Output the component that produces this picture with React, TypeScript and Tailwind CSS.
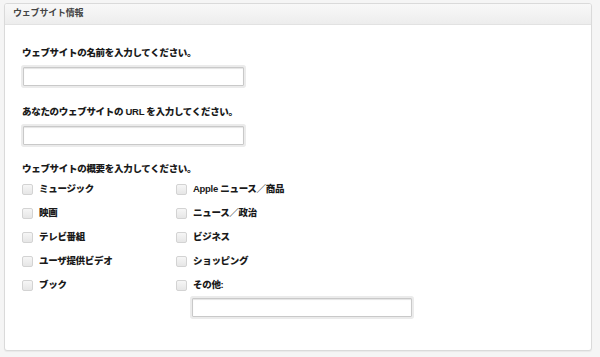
const left = ["ミュージック", "映画", "テレビ番組", "ユーザ提供ビデオ", "ブック"];
const right = ["Apple ニュース／商品", "ニュース／政治", "ビジネス", "ショッピング", "その他:"];

function Check({ label }: { label: string }) {
  return (
    <label className="flex h-[24px] items-center gap-[6px]">
      <span className="h-[11px] w-[11px] shrink-0 rounded-[2px] border border-[#d3d3d3] bg-gradient-to-b from-[#f6f6f6] to-[#e6e6e6]" />
      <span className="text-[9.5px] font-extrabold leading-none tracking-[-0.3px] text-[#1a1a1a]">{label}</span>
    </label>
  );
}

function Field({ className = "" }: { className?: string }) {
  return (
    <input
      type="text"
      className={`h-[19px] rounded-[1px] border border-[#c9c9c9] bg-white shadow-[0_0_0_2px_#ebebeb,inset_0_1px_1px_#e4e4e4] outline-none ${className}`}
    />
  );
}

export default function App() {
  return (
    <div
      className="h-[357px] w-[600px] bg-[#f5f5f5] pl-[4px] pt-[3px]"
      style={{ fontFamily: '"Liberation Sans", "Noto Sans CJK JP", sans-serif' }}
    >
      <div className="h-[348px] w-[588px] overflow-hidden rounded-[3px] border border-[#dadada] bg-white shadow-[0_1px_1px_rgba(0,0,0,0.05)]">
        {/* Header */}
        <div className="flex h-[21px] items-center border-b border-[#e2e2e2] bg-gradient-to-b from-[#f8f8f8] to-[#ededed] pl-[8px]">
          <span className="text-[9px] font-bold tracking-[-0.2px] text-[#444]">ウェブサイト情報</span>
        </div>

        {/* Body */}
        <div className="pl-[17px]">
          <p className="mt-[21px] text-[9.5px] font-extrabold leading-[14px] tracking-[-0.3px] text-[#1a1a1a]">
            ウェブサイトの名前を入力してください。
          </p>
          <Field className="ml-[1px] mt-[7px] w-[221px]" />

          <p className="mt-[16px] text-[9.5px] font-extrabold leading-[14px] tracking-[-0.3px] text-[#1a1a1a]">
            あなたのウェブサイトの URL を入力してください。
          </p>
          <Field className="ml-[1px] mt-[7px] w-[221px]" />

          <p className="mt-[15px] text-[9.5px] font-extrabold leading-[14px] tracking-[-0.3px] text-[#1a1a1a]">
            ウェブサイトの概要を入力してください。
          </p>

          <div className="mt-[1px] grid grid-cols-[154px_1fr]">
            <div className="flex flex-col">
              {left.map((l) => (
                <Check key={l} label={l} />
              ))}
            </div>
            <div className="flex flex-col">
              {right.map((l) => (
                <Check key={l} label={l} />
              ))}
              <Field className="ml-[16px] mt-[1px] w-[220px]" />
            </div>
          </div>
        </div>
      </div>
    </div>
  );
}
